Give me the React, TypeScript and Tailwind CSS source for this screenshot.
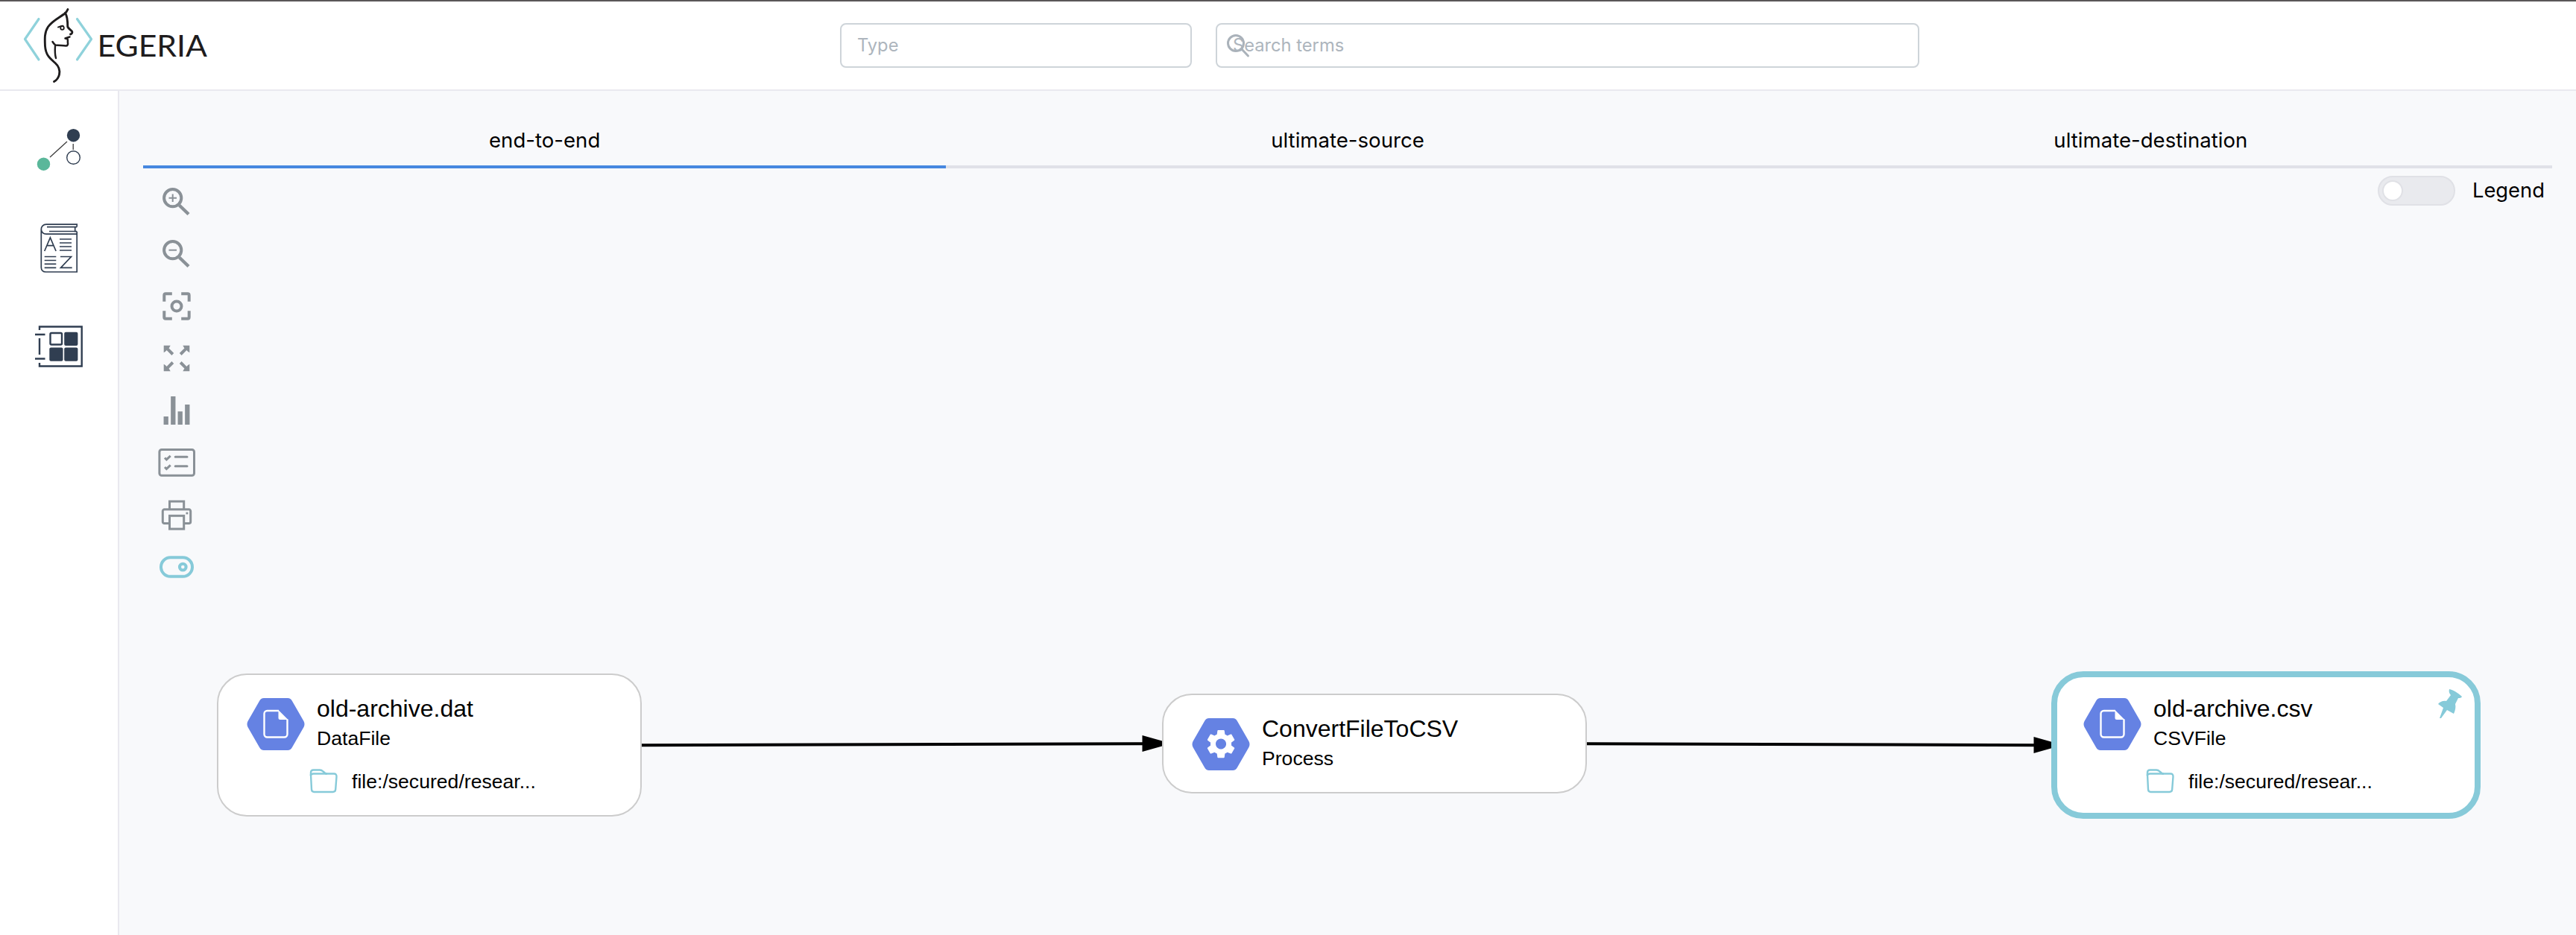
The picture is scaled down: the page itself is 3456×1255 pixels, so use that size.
import React from "react";

const GREY = "#8a9197";
const NAVY = "#303e51";
const TEAL = "#86cad9";

function Logo() {
  return (
    <svg className="block" width="290" height="118" viewBox="0 2 290 118" fill="none" strokeLinecap="round" strokeLinejoin="round">
      <g stroke="#8fd2db" strokeWidth="3.200">
        <path d="M52 25.500 33.500 52.500 52 80" />
        <path d="M103.500 25.500 122.500 52.500 103.500 80" />
      </g>
      <g stroke="#1e1c1d" strokeWidth="2.900">
        <path d="M91 12.500C90 15 89 16.500 86.500 18.500C79 24 70 28 64.500 36C59.500 43.500 60 52 60.500 62C61.500 75 68 79 74 84.500C79 89 80.500 95 79.500 100C78.500 105 76 107.500 72.500 109.500" />
        <path d="M87.500 17.500C90.500 22 90.800 29 90.800 36C92 38.500 94 39.500 96.500 42C97.500 43.500 96.500 45.500 94.500 46" />
        <path d="M93.500 49.500 87.500 51.500 90.500 52.300C91.500 54 90.500 56 91 57.500C91.500 59.500 90.500 61.500 88.500 61.500C83 61 78.500 61.200 74.500 60.500C72.500 59.500 71.500 57.500 70.500 56" strokeWidth="2.500" />
        <path d="M74 61.500C73.500 69 73.500 73 75 78" strokeWidth="2.400" />
        <path d="M78 36.500C80.500 36 81.500 34.500 84.500 34.800" strokeWidth="2" />
        <circle cx="83.500" cy="37.500" r="2.300" strokeWidth="1.800" />
      </g>
      <text x="130.500" y="75.500" textLength="147.500" lengthAdjust="spacingAndGlyphs" fontSize="40.500" fill="#1e1c1d" fontFamily="Lato, sans-serif">
        EGERIA
      </text>
    </svg>
  );
}

function Header() {
  return (
    <header className="flex h-[122px] shrink-0 border-t-2 border-b-2 border-t-[#5a5758] border-b-[#e9e9ef] bg-white">
      <div className="w-[1127px] shrink-0">
        <Logo />
      </div>
      <div className="flex gap-8 pt-[29px]">
        <div className="flex h-15 w-[472px] items-center rounded-lg border-2 border-[#ced4d9] px-[21px] text-[23.700px] text-[#adb5bd]">
          Type
        </div>
        <div className="relative flex h-15 w-[944px] items-center rounded-lg border-2 border-[#ced4d9] px-[21px] text-[23.700px] text-[#adb5bd]">
          Search terms
          <svg className="absolute top-[13px] left-[13px]" width="32" height="32" viewBox="0 0 32 32" fill="none" stroke="#aab2ba" strokeWidth="3">
            <circle cx="12" cy="12" r="10.500" />
            <path d="m19.500 19.500 9 9.500" strokeLinecap="round" />
          </svg>
        </div>
      </div>
    </header>
  );
}

function Sidebar() {
  return (
    <nav className="flex w-40 shrink-0 flex-col border-r-2 border-[#e9e9ef] bg-white pt-[43px]">
      <svg width="158" height="132" viewBox="0 165 158 132" fill="none">
        <path d="m67 211 23-21M98.200 193v8" stroke="#3d3d3d" strokeWidth="1.300" />
        <circle cx="98.500" cy="181.700" r="8.700" fill={NAVY} />
        <circle cx="58.500" cy="220.200" r="8.700" fill="#5ab79a" />
        <circle cx="98.500" cy="211.500" r="8.800" stroke={NAVY} strokeWidth="1.400" />
      </svg>
      <svg width="158" height="132" viewBox="0 297 158 132" fill="none" stroke={NAVY} strokeWidth="1.700">
        <path d="M103.200 304.500v-3.300H62c-4 0-6.700 3-6.700 6.500V359c0 3.500 2.500 6 6 6h41.900v-54.300M55.300 307.500c0 4 3 6.700 6.700 6.700h41M103.200 304.700h-2.500v6h2.500M63 304.700h37.700M66 310.500h34.700" />
        <path d="m59.700 337 7.700-18 7.700 18M62.500 329.700h9.800M80 321h16M80 326h16M80 331h16M80 336h16M59.700 344.500h15.600M59.700 349.500h15.600M59.700 354.300h15.600M59.700 359.300h15.600M81 344.500h14.500L81.500 359.300h15.200" />
      </svg>
      <svg width="158" height="132" viewBox="0 429 158 132" fill="none" stroke={NAVY} strokeWidth="2.400">
        <path d="M53 443v-4.500h56.700v53H53V487M53 454v22M47 449h13.500M47 481.500h13.500" />
        <rect x="67.500" y="447" width="15.500" height="15.500" rx="1.500" />
        <g fill={NAVY} stroke="none">
          <rect x="86.200" y="445.800" width="18.200" height="18.200" rx="2" />
          <rect x="66.300" y="466.500" width="18.200" height="18.200" rx="2" />
          <rect x="86.200" y="466.500" width="18.200" height="18.200" rx="2" />
        </g>
      </svg>
    </nav>
  );
}

function Tool({ children }: { children: React.ReactNode }) {
  return (
    <svg className="block" width="52" height="70" viewBox="0 0 52 70" fill="none" stroke={GREY} strokeWidth="4">
      {children}
    </svg>
  );
}

/* Each tool is drawn in a 52x70 cell centred on (26, 35). */
function Toolbar() {
  return (
    <div className="flex w-[52px] flex-col">
      <Tool>
        <circle cx="20.700" cy="30.700" r="11.600" />
        <path d="m29.500 40.500 12.500 12" strokeWidth="4.500" />
        <path d="M15.500 30.700h10.500M20.700 25.500V36" strokeWidth="2" />
      </Tool>
      <Tool>
        <circle cx="20.700" cy="30.700" r="11.600" />
        <path d="m29.500 40.500 12.500 12" strokeWidth="4.500" />
        <path d="M15.500 30.700h10.500" strokeWidth="2" />
      </Tool>
      <Tool>
        <circle cx="26" cy="36" r="6.500" />
        <path d="M9.300 29.800v-8.500a2 2 0 0 1 2-2h8.500M32.200 19.300h8.500a2 2 0 0 1 2 2v8.500M42.700 42.200v8.500a2 2 0 0 1-2 2h-8.500M19.800 52.700h-8.500a2 2 0 0 1-2-2v-8.500" />
      </Tool>
      <Tool>
        <path d="m12 21.700 8.800 8.800M40 21.700l-8.800 8.800M12 50.300l8.800-8.800M40 50.300l-8.800-8.800" strokeWidth="4" />
        <path d="M8.700 18.700h9l-1.700 3-5 5-2.300 1.500zM43.300 18.700h-9l1.700 3 5 5 2.300 1.500zM8.700 53.300h9l-1.700-3-5-5-2.300-1.500zM43.300 53.300h-9l1.700-3 5-5 2.300-1.500z" fill={GREY} stroke="none" />
      </Tool>
      <Tool>
        <path d="M11.700 55V44M21.300 55V17M30.700 55V37.300M40.300 55V28" strokeWidth="6.300" />
      </Tool>
      <Tool>
        <rect x="2.900" y="18.500" width="46.600" height="34.800" rx="3" strokeWidth="3" />
        <path d="M24.200 28.300h15.800M24.200 40.700h15.800" strokeWidth="3" strokeLinecap="round" />
        <path d="m10 29.500 2.400 2.400 5.300-5M10 42l2.400 2.400 5.300-5" strokeWidth="3" />
      </Tool>
      <Tool>
        <path d="M16.500 47.500H9.500a2.200 2.200 0 0 1-2.200-2.200V31a2.200 2.200 0 0 1 2.200-2.200h33a2.200 2.200 0 0 1 2.200 2.200v14.300a2.200 2.200 0 0 1-2.200 2.200h-7M16.500 28.500V18h19.200v10.500" strokeWidth="3" />
        <rect x="16.500" y="37.300" width="19.200" height="17.700" strokeWidth="3" />
        <rect x="38.500" y="32.500" width="2.800" height="2.800" fill={GREY} stroke="none" />
      </Tool>
      <Tool>
        <rect x="5" y="23.300" width="42" height="25.500" rx="12.700" stroke={TEAL} />
        <circle cx="34.300" cy="36" r="4.300" stroke={TEAL} />
      </Tool>
    </div>
  );
}

function Tabs() {
  return (
    <div className="grid grid-cols-3 text-center text-[27.600px] leading-[36px] text-black">
      <div className="h-[72px] border-b-4 border-[#4788df] pt-[16px]">end-to-end</div>
      <div className="h-[72px] border-b-4 border-[#e0e1e8] pt-[16px]">ultimate-source</div>
      <div className="h-[72px] border-b-4 border-[#e0e1e8] pt-[16px]">ultimate-destination</div>
    </div>
  );
}

function Hexagon({ kind }: { kind: "file" | "gear" }) {
  return (
    <svg className="block shrink-0" width="78" height="70" viewBox="0 0 78 70">
      <path d="M23 0h32q4 0 6 4l15.500 27q2 4 0 8L61 66q-2 4-6 4H23q-4 0-6-4L1.500 39q-2-4 0-8L17 4q2-4 6-4z" fill="#6582e3" />
      {kind === "file" ? (
        <g>
          <path d="M43 17H27.500a4 4 0 0 0-4 4v27.500a4 4 0 0 0 4 4h23a4 4 0 0 0 4-4V28.500" fill="none" stroke="#fff" strokeWidth="2.400" />
          <path d="M42.500 16 55.500 29H45a2.500 2.500 0 0 1-2.500-2.500z" fill="#fff" />
        </g>
      ) : (
        <path
          transform="translate(15.650 11.200) scale(1.950)"
          d="M19.140 12.940c.04-.3.060-.61.060-.94 0-.32-.02-.64-.07-.94l2.030-1.580c.18-.14.230-.41.120-.61l-1.920-3.320c-.12-.22-.37-.29-.59-.22l-2.390.96c-.5-.38-1.030-.7-1.620-.94l-.36-2.540c-.04-.24-.24-.41-.48-.41h-3.840c-.24 0-.43.170-.47.410l-.36 2.540c-.59.240-1.130.570-1.620.94l-2.390-.96c-.22-.08-.47 0-.59.220L2.740 8.870c-.12.210-.08.470.12.610l2.030 1.580c-.05.300-.09.630-.09.940s.02.640.07.940l-2.030 1.580c-.18.140-.23.410-.12.610l1.920 3.320c.12.220.37.290.59.220l2.390-.96c.5.380 1.030.7 1.620.94l.36 2.540c.05.240.24.410.48.410h3.840c.24 0 .44-.17.470-.41l.36-2.540c.59-.24 1.130-.56 1.620-.94l2.390.96c.22.080.47 0 .59-.22l1.920-3.320c.12-.22.070-.47-.12-.61l-2.010-1.580zM12 15.600c-1.980 0-3.600-1.620-3.600-3.600s1.620-3.600 3.600-3.600 3.600 1.620 3.600 3.600-1.620 3.600-3.600 3.600z"
          fill="#fff"
        />
      )}
    </svg>
  );
}

function NodeBody({ kind, title, type, path }: { kind: "file" | "gear"; title: string; type: string; path?: string }) {
  return (
    <div className="font-['Liberation_Sans',Arial,sans-serif] text-black">
      <div className="flex h-[70px] gap-4">
        <Hexagon kind={kind} />
        <div className="-mt-[4px] whitespace-nowrap">
          <div className="text-[32px] leading-[36px]">{title}</div>
          <div className="mt-[6px] text-[26.600px] leading-[32px]">{type}</div>
        </div>
      </div>
      {path && (
        <div className="mt-[21px] flex items-center pl-[83px] text-[26.600px] leading-[38px] whitespace-nowrap">
          <svg className="block" width="40" height="36" viewBox="0 0 40 36" fill="none" stroke={TEAL} strokeWidth="2.400">
            <path d="M3 9.500 4 29.500q.2 3.500 3.500 3.500h25q3.500 0 3.700-3.500l1.300-17q.2-4-3.500-4H23l-3.500-3Q17.500 3.500 15 3.500H6.500Q3 3.500 3 7z" />
            <path d="M2.500 11q1-2.500 4-2.500H25" />
          </svg>
          <span className="pt-[2px] pl-[18px]">{path}</span>
        </div>
      )}
    </div>
  );
}

function Graph() {
  return (
    <>
      <svg className="absolute top-[860px] left-0" width="3296" height="36" viewBox="160 982 3296 36">
        <path d="M860 1000.200 1545 998.200M2128 998.200 2740 1000.200" stroke="#000" strokeWidth="4" />
        <path d="M1532.500 987v22l39-11zM2728.500 989v22l39-11z" fill="#000" />
      </svg>
      <div className="absolute top-[782px] left-[131px] h-[192px] w-[570px] rounded-[40px] border-2 border-[#cccccc] bg-white pt-[31px] pl-[38px]">
        <NodeBody kind="file" title="old-archive.dat" type="DataFile" path="file:/secured/resear..." />
      </div>
      <div className="absolute top-[809px] left-[1399px] h-[134px] w-[570px] rounded-[40px] border-2 border-[#cccccc] bg-white pt-[31px] pl-[38px]">
        <NodeBody kind="gear" title="ConvertFileToCSV" type="Process" />
      </div>
      <div className="absolute top-[779px] left-[2592px] h-[198px] w-[576px] rounded-[43px] border-8 border-[#87cad9] bg-white pt-[28px] pl-[35px]">
        <NodeBody kind="file" title="old-archive.csv" type="CSVFile" path="file:/secured/resear..." />
        <svg className="absolute top-[15px] right-[15px]" width="34" height="40" viewBox="0 0 34 40" fill={TEAL}>
          <path d="M15 1c5 1 12 5 17 10-1 2-3 2-5 2l-4 8c1 4 0 9-2 13l-9-5L4 40H2L7 26 0 21c2-3 7-5 11-4l6-8c-2-2-3-5-2-8z" />
        </svg>
      </div>
    </>
  );
}

export default function App() {
  return (
    <div className="flex h-[1255px] w-[3456px] flex-col overflow-hidden bg-[#f8f9fb] font-[Inter,sans-serif]">
      <Header />
      <div className="flex flex-1">
        <Sidebar />
        <main className="relative flex-1 px-8 pt-8">
          <Tabs />
          <div className="flex items-start justify-between">
            <div className="pt-[9px] pl-[19px]">
              <Toolbar />
            </div>
            <div className="mt-[10px] flex h-10 w-[234px] items-center gap-[23px] text-[27.300px] text-black">
              <div className="flex h-10 w-[104px] items-center rounded-full border-2 border-[#e0e1e6] bg-[#e9eaee] pl-[4px]">
                <div className="h-7 w-7 rounded-full border-2 border-[#e0e1e6] bg-white" />
              </div>
              <span className="pt-px">Legend</span>
            </div>
          </div>
          <Graph />
        </main>
      </div>
    </div>
  );
}
